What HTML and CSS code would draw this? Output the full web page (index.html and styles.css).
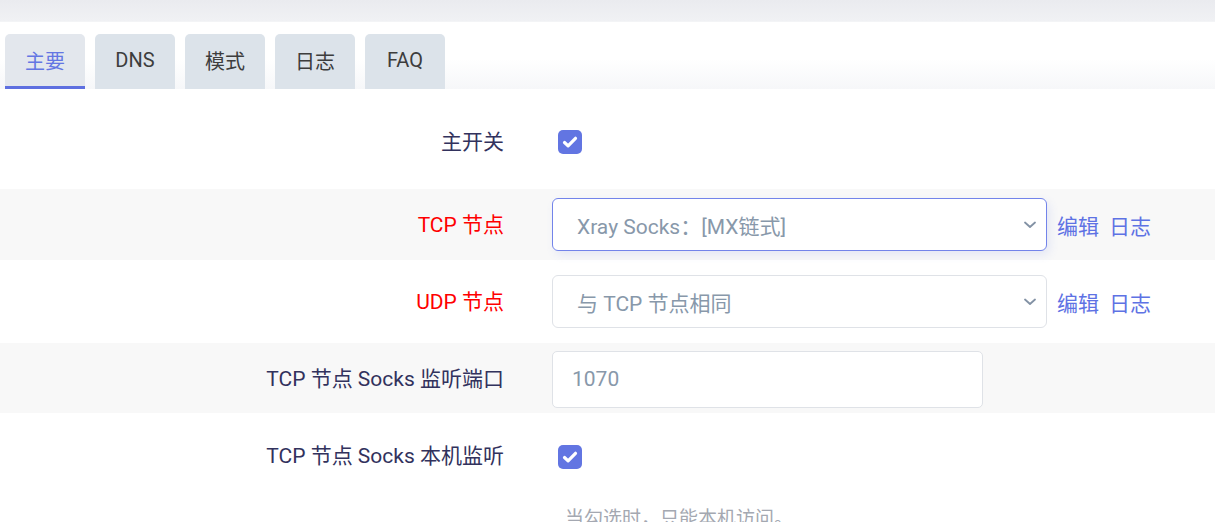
FILE: index.html
```html
<!DOCTYPE html>
<html lang="zh-CN">
<head>
<meta charset="utf-8">
<title>主要</title>
<link rel="stylesheet" href="styles.css">
</head>
<body>
<div class="topbar"></div>
<div class="tabs">
  <div class="tab active">主要</div>
  <div class="tab">DNS</div>
  <div class="tab">模式</div>
  <div class="tab">日志</div>
  <div class="tab">FAQ</div>
</div>
<div class="form">
  <div class="row row-1">
    <div class="label">主开关</div>
    <div class="field"><span class="check"><svg viewBox="0 0 24 24" width="24" height="24"><path d="M6.5 12.5l3.6 3.4 7.4-7.6" fill="none" stroke="#fff" stroke-width="3.2" stroke-linecap="round" stroke-linejoin="round"/></svg></span></div>
  </div>
  <div class="row row-2 alt">
    <div class="label red">TCP 节点</div>
    <div class="field">
      <div class="select focused"><span>Xray Socks：[MX链式]</span><svg class="chev" viewBox="0 0 12 8" width="12" height="8"><path d="M1 1.5l5 4.5 5-4.5" fill="none" stroke="#8392a5" stroke-width="1.8" stroke-linecap="round" stroke-linejoin="round"/></svg></div>
      <a class="link">编辑</a><a class="link">日志</a>
    </div>
  </div>
  <div class="row row-3">
    <div class="label red">UDP 节点</div>
    <div class="field">
      <div class="select"><span>与 TCP 节点相同</span><svg class="chev" viewBox="0 0 12 8" width="12" height="8"><path d="M1 1.5l5 4.5 5-4.5" fill="none" stroke="#8392a5" stroke-width="1.8" stroke-linecap="round" stroke-linejoin="round"/></svg></div>
      <a class="link">编辑</a><a class="link">日志</a>
    </div>
  </div>
  <div class="row row-4 alt">
    <div class="label">TCP 节点 Socks 监听端口</div>
    <div class="field"><input class="input" type="text" placeholder="1070"></div>
  </div>
  <div class="row row-5">
    <div class="label">TCP 节点 Socks 本机监听</div>
    <div class="field col">
      <span class="check"><svg viewBox="0 0 24 24" width="24" height="24"><path d="M6.5 12.5l3.6 3.4 7.4-7.6" fill="none" stroke="#fff" stroke-width="3.2" stroke-linecap="round" stroke-linejoin="round"/></svg></span>
      <div class="help">当勾选时，只能本机访问。</div>
    </div>
  </div>
</div>
</body>
</html>
```
FILE: styles.css
```css
html, body {
  margin: 0;
  padding: 0;
  background: #fff;
  font-family: "Roboto", "Noto Sans CJK SC", sans-serif;
  overflow: hidden;
}
.topbar {
  height: 21px;
  background: linear-gradient(to bottom, #eaebef, #f0f1f4);
  border-bottom: 1px solid #f3f4f6;
}
.tabs {
  display: flex;
  gap: 10px;
  padding: 12px 5px 0;
  height: 55px;
  background: linear-gradient(to bottom, #ffffff 55%, #f6f7f9);
}
.tab {
  width: 80px;
  height: 55px;
  box-sizing: border-box;
  background: #dce3ea;
  border-radius: 5px 5px 0 0;
  display: flex;
  align-items: center;
  justify-content: center;
  padding-bottom: 3px;
  font-size: 20px;
  color: #3d3d3d;
}
.tab.active {
  background: #e3e7ed;
  color: #6476e3;
  padding-bottom: 0;
  border-bottom: 3px solid #5e6fe0;
}
.form {
  display: flex;
  flex-direction: column;
}
.row {
  display: flex;
  align-items: center;
  box-sizing: border-box;
}
.row.alt { background: #f8f8f8; }
.row-1 { height: 100px; padding-top: 6px; }
.row-2 { height: 71px; }
.row-3 { height: 83px; }
.row-4 { height: 70px; padding-top: 2px; }
.row-5 { padding-top: 32px; align-items: flex-start; }
.label {
  width: 504px;
  text-align: right;
  margin-right: 48px;
  font-size: 21px;
  line-height: 26px;
  color: #32325d;
  flex-shrink: 0;
}
.row-5 .label { margin-top: -2px; }
.label.red { color: #ff0000; }
.field {
  display: flex;
  align-items: center;
}
.field.col {
  flex-direction: column;
  align-items: flex-start;
}
.check {
  width: 24px;
  height: 24px;
  border-radius: 5px;
  background: #6275e2;
  margin-left: 6px;
  display: block;
}
.check svg { display: block; }
.select {
  width: 495px;
  height: 53px;
  box-sizing: border-box;
  border: 1px solid #dfe2e7;
  border-radius: 6px;
  background: #fff;
  display: flex;
  align-items: center;
  padding: 0 8px 0 24px;
  font-size: 21px;
  color: #8898aa;
}
.select span { flex: 1; }
.select.focused {
  border-color: #7384ea;
  box-shadow: 3px 4px 10px rgba(94, 114, 228, 0.12);
}
.chev { display: block; margin-right: 2px; }
.link {
  font-size: 21px;
  color: #5e72e4;
  margin-left: 10px;
  cursor: pointer;
}
.input {
  width: 431px;
  height: 57px;
  box-sizing: border-box;
  border: 1px solid #dfe2e7;
  border-radius: 5px;
  background: #fff;
  padding: 0 19px;
  font-family: "Roboto", "Noto Sans CJK SC", sans-serif;
  font-size: 21px;
  color: #32325d;
  outline: none;
}
.input::placeholder { color: #8898aa; }
.help {
  margin-top: 34px;
  margin-left: 13px;
  font-size: 19px;
  color: #a4a8b1;
}
```
